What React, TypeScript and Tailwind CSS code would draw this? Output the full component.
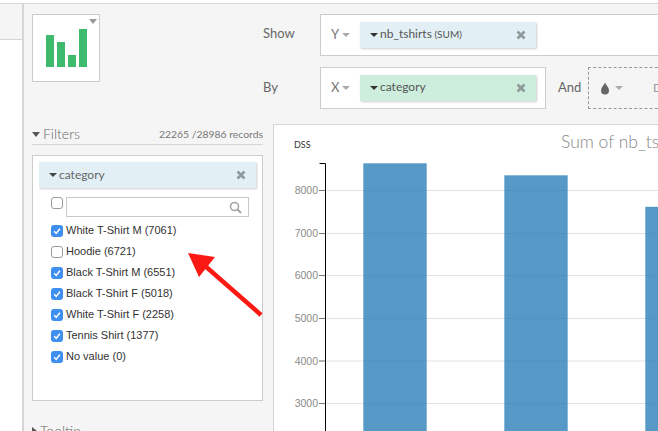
import React from "react";

const items: [string, boolean][] = [
  ["White T-Shirt M (7061)", true],
  ["Hoodie (6721)", false],
  ["Black T-Shirt M (6551)", true],
  ["Black T-Shirt F (5018)", true],
  ["White T-Shirt F (2258)", true],
  ["Tennis Shirt (1377)", true],
  ["No value (0)", true],
];

function Caret({ className = "" }: { className?: string }) {
  return <span className={"inline-block shrink-0 w-0 h-0 border-x-[4px] border-x-transparent border-t-[4px] " + className} />;
}

function Close() {
  return (
    <svg width="10" height="10" viewBox="0 0 10 10" className="shrink-0">
      <path d="M1.5 1.5 L8.5 8.5 M8.5 1.5 L1.5 8.5" stroke="#8f9a9b" strokeWidth="2.6" />
    </svg>
  );
}

function Check({ on }: { on: boolean }) {
  return on ? (
    <span className="w-3 h-3 rounded-[3px] bg-[#3f8ff0] flex items-center justify-center shrink-0">
      <svg width="10" height="10" viewBox="0 0 10 10">
        <path d="M2.2 5.3 L4.2 7.4 L7.9 2.8" stroke="#fff" strokeWidth="1.5" fill="none" />
      </svg>
    </span>
  ) : (
    <span className="w-3 h-3 rounded-[3px] bg-white border border-[#9a9a9a] shrink-0" />
  );
}

function Chip({ label, suffix, bg }: { label: string; suffix?: string; bg: string }) {
  return (
    <div className={"w-[176px] h-[26px] shrink-0 flex items-center pl-[10px] pr-[10px] shadow-[1px_1px_2px_rgba(0,0,0,0.2)] " + bg}>
      <Caret className="border-t-[#333] mr-[2px]" />
      <span className="text-[12px] text-[#555] flex-1 whitespace-nowrap -mt-[2px]">
        {label}
        {suffix && <span className="text-[10px]"> {suffix}</span>}
      </span>
      <Close />
    </div>
  );
}

function Chart() {
  const ticks: [string, number][] = [
    ["8000", 66],
    ["7000", 109],
    ["6000", 151],
    ["5000", 194],
    ["4000", 236.5],
    ["3000", 279],
  ];
  return (
    <svg width="384" height="307" viewBox="0 0 384 307" className="block -mt-px">
      {ticks.map(([t, y]) => (
        <g key={t}>
          <line x1="45" x2="384" y1={y + 0.5} y2={y + 0.5} stroke="#e2e2e2" strokeWidth="1" />
          <line x1="45" x2="51" y1={y + 0.5} y2={y + 0.5} stroke="#777" />
          <text x="44" y={y + 4} textAnchor="end" fontSize="10.5" fill="#8a8a8a" fontFamily="'Liberation Sans', sans-serif">{t}</text>
        </g>
      ))}
      <path d="M45.5 39.5 H51.5 V307" stroke="#000" strokeWidth="1" fill="none" />
      <g fill="#2c7fb8" fillOpacity="0.8" stroke="#2c7fb8" strokeOpacity="0.25">
        <rect x="89.5" y="39.5" width="63" height="268" />
        <rect x="230.5" y="51.5" width="63" height="256" />
        <rect x="371.5" y="83" width="20" height="225" />
      </g>
      <text x="20" y="24" fontSize="9" fill="#333" fontFamily="'Lato', sans-serif">DSS</text>
      <text x="287" y="24" fontSize="17.5" fill="#888" fontFamily="'Lato', sans-serif" fontWeight="300">Sum of nb_ts</text>
    </svg>
  );
}

export default function App() {
  return (
    <div className="relative w-[658px] h-[431px] overflow-hidden bg-white flex font-['Lato',sans-serif]">
      <div className="w-[22px] shrink-0 flex flex-col">
        <div className="h-[3px] bg-white shrink-0" />
        <div className="h-[37px] shrink-0 bg-[#f5f5f5] border-t border-b border-[#d5d5d5]" />
      </div>
      <div className="flex-1 mt-[3px] border-l-2 border-t border-[#d5d5d5] bg-[#f5f5f5] flex min-w-0">
        <div className="w-[239px] shrink-0 pl-[8px] pt-[10px] flex flex-col">
          <div className="relative shrink-0 w-[68px] h-[68px] border border-[#ccc] bg-white">
            <Caret className="absolute right-[2px] top-[4px] border-t-[#999] !border-x-[4px] !border-t-[5px]" />
            <div className="absolute left-[13px] bottom-[14px] flex items-end gap-[3px]">
              <div className="w-[8px] h-[32px] bg-[#3dba6b]" />
              <div className="w-[8px] h-[25px] bg-[#3dba6b]" />
              <div className="w-[8px] h-[12px] bg-[#3dba6b]" />
              <div className="w-[8px] h-[38px] bg-[#3dba6b]" />
            </div>
          </div>
          <div className="mt-[43px] h-[20px] shrink-0 border-b border-[#d5d5d5] flex items-start justify-between">
            <div className="flex items-center gap-[3px]">
              <Caret className="border-t-[#555] !border-x-[4px] !border-t-[5px]" />
              <span className="text-[14px] text-[#666] font-light leading-[18px]">Filters</span>
            </div>
            <span className="text-[10.4px] text-[#777] leading-[14px] whitespace-nowrap mt-[2px]">22265 /28986 records</span>
          </div>
          <div className="mt-[10px] h-[246px] shrink-0 border border-[#ccc] bg-white px-[6px] pt-[6px]">
            <div className="h-[26px] bg-[#e2f0f6] shadow-[1px_1px_2px_rgba(0,0,0,0.2)] flex items-center pl-[10px] pr-[10px]">
              <Caret className="border-t-[#444] mr-[2px]" />
              <span className="text-[12px] text-[#666] flex-1">category</span>
              <Close />
            </div>
            <div className="mt-[9px] ml-[12px] flex items-start gap-[3px]">
              <Check on={false} />
              <div className="w-[183px] h-[20px] border border-[#c8c8c8] flex items-center justify-end pr-[6px]">
                <svg width="13" height="13" viewBox="0 0 13 13">
                  <circle cx="5.5" cy="5.5" r="4" stroke="#a5a5a5" strokeWidth="1.6" fill="none" />
                  <path d="M8.5 8.5 L12 12" stroke="#a5a5a5" strokeWidth="2" />
                </svg>
              </div>
            </div>
            <div className="mt-[3px] ml-[12px] flex flex-col">
              {items.map(([label, on]) => (
                <div key={label} className="h-[21px] flex items-center gap-[3px]">
                  <Check on={on} />
                  <span className="text-[11px] text-[#333] font-['Liberation_Sans',sans-serif] whitespace-nowrap">{label}</span>
                </div>
              ))}
            </div>
          </div>
          <div className="mt-[21px] shrink-0 flex items-center gap-[3px]">
            <span className="w-0 h-0 border-y-[4px] border-y-transparent border-l-[5px] border-l-[#555]" />
            <span className="text-[14px] text-[#666] font-light leading-[18px]">Tooltip</span>
          </div>
        </div>
        <div className="flex-1 min-w-0 flex flex-col">
          <div className="flex h-[120px] shrink-0 text-[#666] text-[13px] pt-[10px]">
            <div className="w-[57px] shrink-0 flex flex-col">
              <div className="h-[39px] flex items-center">Show</div>
              <div className="h-[42px] mt-[14px] flex items-center">By</div>
            </div>
            <div className="flex-1 min-w-0 flex flex-col gap-[11px]">
              <div className="h-[42px] border border-[#ccc] border-r-0 bg-white flex items-center pl-[10px] w-[340px] shrink-0">
                <span className="w-[29px] shrink-0 flex items-center gap-[3px] text-[#777]">Y<Caret className="border-t-[#aaa]" /></span>
                <Chip label="nb_tshirts" suffix="(SUM)" bg="bg-[#e2f0f6]" />
              </div>
              <div className="flex items-center h-[42px] shrink-0">
                <div className="h-[42px] w-[226px] border border-[#ccc] bg-white flex items-center pl-[10px] shrink-0">
                  <span className="w-[29px] shrink-0 flex items-center gap-[3px] text-[#777]">X<Caret className="border-t-[#aaa]" /></span>
                  <Chip label="category" bg="bg-[#cdeedd]" />
                </div>
                <span className="ml-[12px] w-[30px] shrink-0">And</span>
                <div className="h-[42px] w-[80px] border border-dashed border-[#999] border-r-0 flex items-center pl-[11px] gap-[5px] shrink-0">
                  <svg width="10" height="13" viewBox="0 0 10 13" className="shrink-0">
                    <path d="M5 0.5 C6 3 9 5.5 9 8.5 A4 4 0 0 1 1 8.5 C1 5.5 4 3 5 0.5Z" fill="#666" />
                  </svg>
                  <Caret className="border-t-[#aaa]" />
                  <span className="ml-[25px] text-[#999] text-[12px]">D</span>
                </div>
              </div>
            </div>
          </div>
          <div className="ml-[10px] border-l border-t border-[#d5d5d5] bg-white h-[307px] w-[386px] shrink-0 overflow-hidden">
            <Chart />
          </div>
        </div>
      </div>
      <svg width="658" height="431" viewBox="0 0 658 431" className="absolute left-0 top-0 pointer-events-none">
        <path d="M261 315 L204 265" stroke="#fb1a13" strokeWidth="4.5" />
        <path d="M188 253 L215 257 L199 277 Z" fill="#fb1a13" />
      </svg>
    </div>
  );
}
